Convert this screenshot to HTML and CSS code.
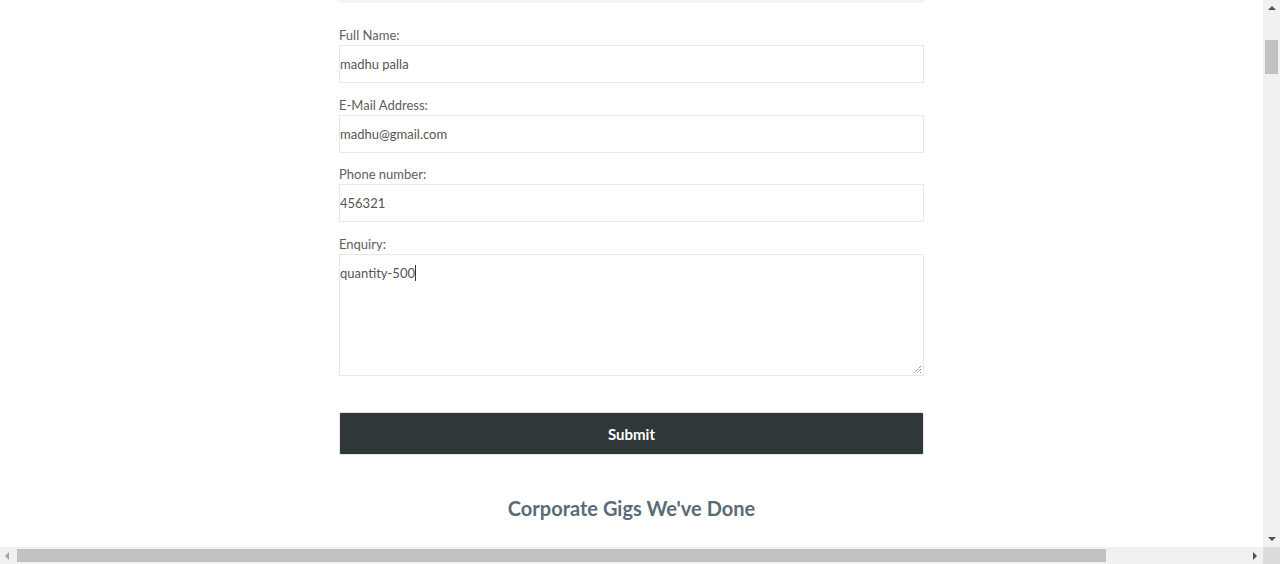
FILE: index.html
```html
<!DOCTYPE html>
<html lang="en">
<head>
<meta charset="utf-8">
<title>Enquiry</title>
<link rel="stylesheet" href="styles.css">
</head>
<body>
<div class="window">
  <main class="viewport">
    <div class="container">
      <div class="topbar"></div>
      <form class="form">
        <label class="label">Full Name:</label>
        <div class="field">madhu palla</div>
        <label class="label">E-Mail Address:</label>
        <div class="field">madhu@gmail.com</div>
        <label class="label">Phone number:</label>
        <div class="field">456321</div>
        <label class="label">Enquiry:</label>
        <div class="field area">quantity-500<span class="caret"></span>
          <svg class="grip" width="9" height="9" viewBox="0 0 9 9"><path d="M8 1L1 8M8 4L4 8M8 7L7 8" stroke="#555" stroke-width="1" stroke-dasharray="1 1" fill="none"/></svg>
        </div>
        <button class="submit" type="button">Submit</button>
      </form>
      <h2 class="heading">Corporate Gigs We've Done</h2>
    </div>
  </main>
  <div class="vscroll">
    <div class="arrow up"></div>
    <div class="vthumb"></div>
    <div class="vtrack"></div>
    <div class="arrow down"></div>
  </div>
  <div class="hscroll">
    <div class="arrow left"></div>
    <div class="hthumb"></div>
    <div class="htrack"></div>
    <div class="arrow right"></div>
  </div>
  <div class="corner"></div>
</div>
</body>
</html>
```
FILE: styles.css
```css
html, body {
  margin: 0;
  padding: 0;
  height: 100%;
  overflow: hidden;
  background: #fff;
}
body {
  font-family: Lato, "Open Sans", sans-serif;
  color: #555;
}
.window {
  display: grid;
  grid-template-columns: 1fr 17px;
  grid-template-rows: 1fr 17px;
  height: 564px;
  width: 1280px;
}
.viewport {
  overflow: hidden;
  display: flex;
  justify-content: center;
}
.container {
  width: 585px;
}
.topbar {
  height: 3px;
  background: #f3f3f3;
}
.form {
  display: flex;
  flex-direction: column;
  padding-top: 22px;
}
.label {
  font-size: 13px;
  line-height: 20px;
  color: #5e5e5e;
}
.field {
  box-sizing: border-box;
  height: 38px;
  border: 1px solid #e8e8e8;
  font-size: 13px;
  line-height: 36px;
  color: #555;
  padding: 0;
  margin-bottom: 11.67px;
}
.field.area {
  height: 122px;
  line-height: 36px;
  position: relative;
  margin-bottom: 36.5px;
}
.caret {
  display: inline-block;
  width: 1px;
  height: 16px;
  background: #333;
  vertical-align: -3px;
}
.grip {
  position: absolute;
  right: 1px;
  bottom: 1px;
}
.submit {
  height: 43px;
  background: #2f3739;
  border: 1px solid #e4e4e4;
  border-radius: 2px;
  color: #fff;
  font-family: Lato, "Open Sans", sans-serif;
  font-weight: 700;
  font-size: 15px;
}
.heading {
  margin: 39.5px 0 0;
  text-align: center;
  font-size: 20px;
  font-weight: 700;
  color: #5a6b77;
  line-height: 26px;
}
.vscroll {
  background: #f1f1f1;
  display: flex;
  flex-direction: column;
  align-items: center;
}
.vthumb {
  width: 13px;
  height: 34px;
  background: #c1c1c1;
  margin-top: 30px;
}
.vtrack { flex: 1; }
.hscroll {
  background: #f1f1f1;
  display: flex;
  align-items: center;
}
.hthumb {
  height: 13px;
  width: 1089px;
  background: #c1c1c1;
  margin-left: 8px;
}
.htrack { flex: 1; }
.corner { background: #dcdcdc; }
.arrow {
  width: 0;
  height: 0;
  border: 4px solid transparent;
}
.arrow.up { border-bottom-color: #505050; border-top-width: 0; margin-top: 6px; }
.arrow.down { border-top-color: #505050; border-bottom-width: 0; margin-bottom: 6px; }
.arrow.left { border-right-color: #a3a3a3; border-left-width: 0; margin-left: 5px; }
.arrow.right { border-left-color: #505050; border-right-width: 0; margin-right: 6px; }
```
